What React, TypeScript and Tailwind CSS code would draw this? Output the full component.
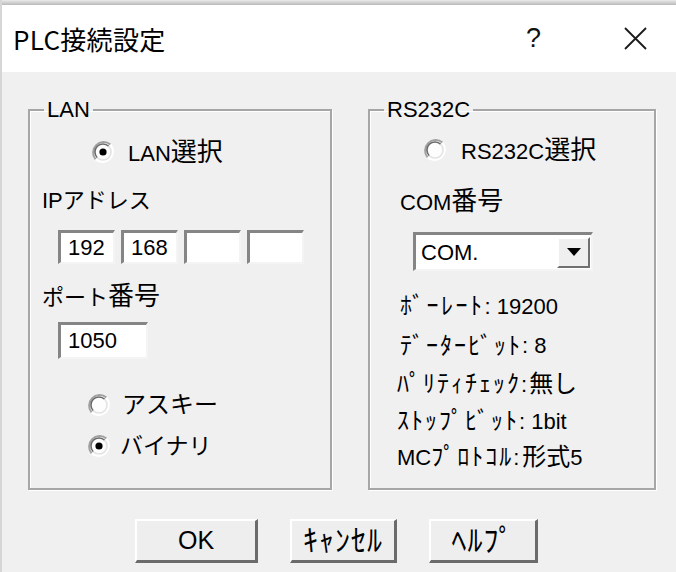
import React from "react";

const FONT = '"Liberation Sans", "Noto Sans CJK JP", sans-serif';

function Radio({ checked }: { checked: boolean }) {
  return (
    <svg width="24" height="24" viewBox="0 0 24 24" className="shrink-0">
      <circle cx="12" cy="12" r="10.5" fill="#fdfdfd" />
      <path d="M4.6 19.4 A10.5 10.5 0 0 1 19.4 4.6" fill="none" stroke="#a0a0a0" strokeWidth="2" />
      <path d="M6.3 17.7 A8 8 0 0 1 17.7 6.3" fill="none" stroke="#6a6a6a" strokeWidth="1.6" />
      <path d="M19.4 4.6 A10.5 10.5 0 0 1 4.6 19.4" fill="none" stroke="#ffffff" strokeWidth="2" />
      <path d="M17.7 6.3 A8 8 0 0 1 6.3 17.7" fill="none" stroke="#e3e3e3" strokeWidth="1.6" />
      {checked && <circle cx="12" cy="12" r="3.6" fill="#000" />}
    </svg>
  );
}

function Edit({ value, w, h }: { value?: string; w: string; h: string }) {
  return (
    <div
      className={`${w} ${h} bg-white border-t-[3px] border-l-[3px] border-b-2 border-r-2 border-t-[#858585] border-l-[#858585] border-b-[#f4f4f4] border-r-[#f4f4f4] flex items-center pl-[7px] text-[22px] leading-none text-black`}
    >
      {value}
    </div>
  );
}

function Btn({ children, w }: { children: React.ReactNode; w: string }) {
  return (
    <div
      className={`${w} h-[44px] bg-[#eeeeee] border-t-2 border-l-2 border-t-white border-l-white border-b-[3px] border-r-[3px] border-b-[#6b6b6b] border-r-[#6b6b6b] flex items-center justify-center text-black leading-none`}
    >
      {children}
    </div>
  );
}

export default function App() {
  return (
    <div
      className="w-[676px] h-[572px] overflow-hidden bg-[#f0f0f0] flex flex-col border-l-2 border-l-[#d6d6d6]"
      style={{ fontFamily: FONT }}
    >
      <div className="h-[5px] bg-gradient-to-b from-[#eaeaea] to-[#b9b9b9] shrink-0" />
      <div className="h-[67px] bg-white flex items-center shrink-0">
        <span
          className="ml-[11px] text-[26px] text-black tracking-[0.3px]"
          style={{ fontFamily: '"Noto Sans CJK JP", "Noto Sans", sans-serif' }}
        >
          PLC接続設定
        </span>
        <span className="ml-auto mr-[82px] text-[27px] text-[#111]">?</span>
        <svg width="25" height="25" viewBox="0 0 25 25" className="mr-[28px]">
          <path d="M2 2 L23 23 M23 2 L2 23" stroke="#1a1a1a" strokeWidth="1.8" />
        </svg>
      </div>

      <div className="flex pt-[26px] pl-[26px] gap-[36px] text-[22px] text-black">
        {/* LAN */}
        <fieldset className="w-[304px] h-[392px] border-2 border-[#a6a6a6] shadow-[inset_1px_1px_0_#fff,1px_1px_0_#fff]">
          <legend className="ml-[14px] px-[3px] h-[24px] leading-[24px]">LAN</legend>
          <div className="flex flex-col">
            <div className="h-[30px] mt-[15px] flex items-center pl-[61px] gap-[13px]">
              <Radio checked />
              <span>
                LAN<span className="text-[26px]">選択</span>
              </span>
            </div>
            <div className="h-[30px] mt-[18px] flex items-center pl-[12px]">
              <span>
                IP<span className="text-[22px]">アドレス</span>
              </span>
            </div>
            <div className="mt-[15px] flex pl-[28px] gap-[6px]">
              <Edit value="192" w="w-[57px]" h="h-[34px]" />
              <Edit value="168" w="w-[57px]" h="h-[34px]" />
              <Edit w="w-[57px]" h="h-[34px]" />
              <Edit w="w-[57px]" h="h-[34px]" />
            </div>
            <div className="h-[30px] mt-[17px] flex items-center pl-[12px]">
              <span className="text-[22px]">
                ポート<span className="text-[26px]">番号</span>
              </span>
            </div>
            <div className="mt-[11px] pl-[28px]">
              <Edit value="1050" w="w-[90px]" h="h-[37px]" />
            </div>
            <div className="h-[30px] mt-[31px] flex items-center pl-[57px] gap-[11px]">
              <Radio checked={false} />
              <span className="text-[24px]">アスキー</span>
            </div>
            <div className="h-[30px] mt-[11px] flex items-center pl-[57px] gap-[9px]">
              <Radio checked />
              <span className="text-[23px]">バイナリ</span>
            </div>
          </div>
        </fieldset>

        {/* RS232C */}
        <fieldset className="w-[288px] h-[392px] border-2 border-[#a6a6a6] shadow-[inset_1px_1px_0_#fff,1px_1px_0_#fff]">
          <legend className="ml-[14px] px-[3px] h-[24px] leading-[24px]">RS232C</legend>
          <div className="flex flex-col">
            <div className="h-[30px] mt-[13px] flex items-center pl-[53px] gap-[14px]">
              <Radio checked={false} />
              <span>
                RS232C<span className="text-[26px]">選択</span>
              </span>
            </div>
            <div className="h-[30px] mt-[21px] flex items-center pl-[30px]">
              <span>
                COM<span className="text-[26px]">番号</span>
              </span>
            </div>
            <div className="mt-[16px] pl-[43px]">
              <div className="w-[180px] h-[39px] bg-white border-t-[3px] border-l-[3px] border-b-2 border-r-2 border-t-[#858585] border-l-[#858585] border-b-[#f4f4f4] border-r-[#f4f4f4] flex items-center">
                <span className="pl-[5px] flex-1">COM.</span>
                <div className="w-[33px] h-[31px] mr-[1px] bg-[#efefef] border-t-2 border-l-2 border-t-white border-l-white border-b-2 border-r-2 border-b-[#707070] border-r-[#707070] flex items-center justify-center">
                  <svg width="14" height="8" viewBox="0 0 14 8">
                    <path d="M0 0 H14 L7 8 Z" fill="#000" />
                  </svg>
                </div>
              </div>
            </div>
            <div className="mt-[15px] flex flex-col pl-[27px]">
              <div className="h-[40px] flex items-center pl-[3px]">
                <span className="text-[24px] tracking-[2.5px]">ﾎﾞｰﾚｰﾄ</span>: 19200
              </div>
              <div className="h-[39px] flex items-center pl-[3px]">
                <span className="text-[24px] tracking-[2px]">ﾃﾞｰﾀｰﾋﾞｯﾄ</span>: 8
              </div>
              <div className="h-[38px] flex items-center">
                <span className="text-[24px] tracking-[2px]">ﾊﾟﾘﾃｨﾁｪｯｸ</span>:<span className="text-[24px] ml-[2px]">無し</span>
              </div>
              <div className="h-[36px] flex items-center">
                <span className="text-[24px] tracking-[2px]">ｽﾄｯﾌﾟﾋﾞｯﾄ</span>: 1bit
              </div>
              <div className="h-[36px] flex items-center">
                MC<span className="text-[24px] tracking-[2px]">ﾌﾟﾛﾄｺﾙ</span>:<span className="text-[24px] ml-[3px]">形式</span>5
              </div>
            </div>
          </div>
        </fieldset>
      </div>

      <div className="flex mt-[29px] pl-[133px] gap-[32px]">
        <Btn w="w-[123px]">
          <span className="text-[25px]">OK</span>
        </Btn>
        <Btn w="w-[107px]">
          <span className="text-[30px] tracking-[1px]">ｷｬﾝｾﾙ</span>
        </Btn>
        <Btn w="w-[109px]">
          <span className="text-[30px] tracking-[1px]">ﾍﾙﾌﾟ</span>
        </Btn>
      </div>
    </div>
  );
}
